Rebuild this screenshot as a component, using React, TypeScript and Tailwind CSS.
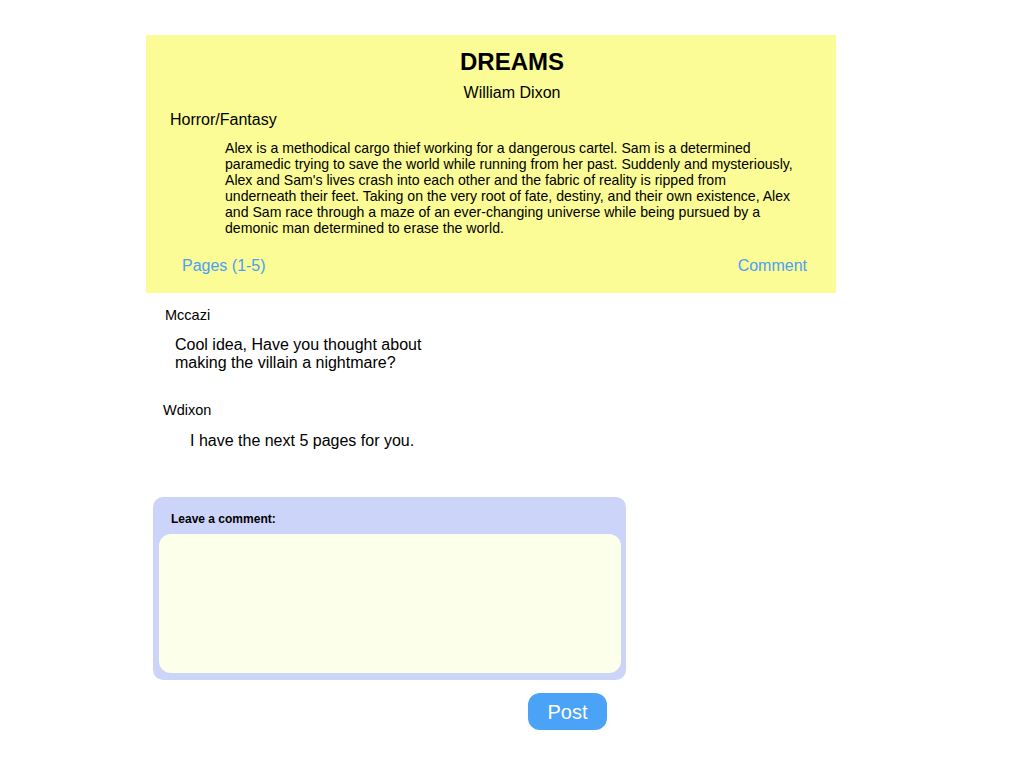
export default function App() {
  return (
    <div className="min-h-[768px] bg-white pt-[35px] font-['Liberation_Sans',Arial,sans-serif] text-black">
      <div className="ml-[146px] w-[690px] bg-[#fbfc96] pt-[13px] pb-[17px]">
        <div className="pl-[42px]">
          <h1 className="text-center text-[24px] font-bold leading-[28px]">DREAMS</h1>
          <div className="mt-[7px] text-center text-[16px] leading-[20px]">William Dixon</div>
        </div>
        <div className="mt-[7px] pl-[24px] text-[16px] leading-[20px]">Horror/Fantasy</div>
        <p className="ml-[79px] mt-[10px] w-[600px] text-[14.1px] leading-[16px]">
          Alex is a methodical cargo thief working for a dangerous cartel. Sam is a determined
          <br />
          paramedic trying to save the world while running from her past. Suddenly and mysteriously,
          <br />
          Alex and Sam's lives crash into each other and the fabric of reality is ripped from
          <br />
          underneath their feet. Taking on the very root of fate, destiny, and their own existence, Alex
          <br />
          and Sam race through a maze of an ever-changing universe while being pursued by a
          <br />
          demonic man determined to erase the world.
        </p>
        <div className="mt-[20px] flex justify-between pl-[36px] pr-[29px] text-[16px] leading-[20px] text-[#4a9ff5]">
          <span>Pages (1-5)</span>
          <span>Comment</span>
        </div>
      </div>

      {/* comments */}
      <div className="ml-[146px]">
        <div className="mt-[14px] pl-[19px] text-[14.5px] leading-[16px]">Mccazi</div>
        <p className="mt-[13px] w-[290px] pl-[29px] text-[16px] leading-[18px]">
          Cool idea, Have you thought about making the villain a nightmare?
        </p>
        <div className="mt-[30px] pl-[17px] text-[14.5px] leading-[16px]">Wdixon</div>
        <p className="mt-[14px] pl-[44px] text-[16px] leading-[18px]">I have the next 5 pages for you.</p>

        <div className="ml-[7px] mt-[47px] w-[473px] rounded-[10px] bg-[#cdd4fa] pb-[7px] pt-[15px]">
          <div className="pl-[18px] text-[12px] font-bold leading-[14px]">Leave a comment:</div>
          <textarea className="ml-[6px] mt-[8px] block h-[139px] w-[462px] resize-none rounded-[12px] bg-[#fcffe9] p-2 text-[14px] outline-none" />
        </div>
        <button className="ml-[382px] mt-[13px] h-[37px] w-[79px] rounded-[12px] bg-[#4aa3f6] text-[20px] text-white">
          Post
        </button>
      </div>
    </div>
  )
}
